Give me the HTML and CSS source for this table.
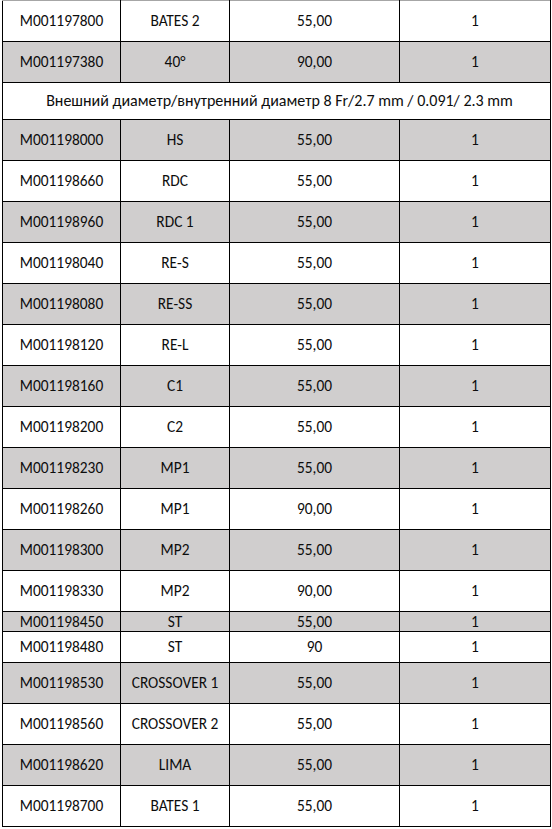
FILE: index.html
```html
<!DOCTYPE html>
<html lang="ru">
<head>
<meta charset="utf-8">
<title>Таблица</title>
<link rel="stylesheet" href="styles.css">
</head>
<body>
<table class="grid">
  <colgroup>
    <col class="c1"><col class="c2"><col class="c3"><col class="c4">
  </colgroup>
  <tbody>
    <tr class="first"><td>M001197800</td><td>BATES 2</td><td>55,00</td><td>1</td></tr>
    <tr class="alt"><td>M001197380</td><td>40°</td><td>90,00</td><td>1</td></tr>
    <tr class="note"><td colspan="4">Внешний диаметр/внутренний диаметр 8 Fr/2.7 mm / 0.091/ 2.3 mm</td></tr>
    <tr class="alt"><td>M001198000</td><td>HS</td><td>55,00</td><td>1</td></tr>
    <tr><td>M001198660</td><td>RDC</td><td>55,00</td><td>1</td></tr>
    <tr class="alt"><td>M001198960</td><td>RDC 1</td><td>55,00</td><td>1</td></tr>
    <tr><td>M001198040</td><td>RE-S</td><td>55,00</td><td>1</td></tr>
    <tr class="alt"><td>M001198080</td><td>RE-SS</td><td>55,00</td><td>1</td></tr>
    <tr><td>M001198120</td><td>RE-L</td><td>55,00</td><td>1</td></tr>
    <tr class="alt"><td>M001198160</td><td>C1</td><td>55,00</td><td>1</td></tr>
    <tr><td>M001198200</td><td>C2</td><td>55,00</td><td>1</td></tr>
    <tr class="alt"><td>M001198230</td><td>MP1</td><td>55,00</td><td>1</td></tr>
    <tr><td>M001198260</td><td>MP1</td><td>90,00</td><td>1</td></tr>
    <tr class="alt"><td>M001198300</td><td>MP2</td><td>55,00</td><td>1</td></tr>
    <tr><td>M001198330</td><td>MP2</td><td>90,00</td><td>1</td></tr>
    <tr class="alt short"><td>M001198450</td><td>ST</td><td>55,00</td><td>1</td></tr>
    <tr class="mid"><td>M001198480</td><td>ST</td><td>90</td><td>1</td></tr>
    <tr class="alt"><td>M001198530</td><td>CROSSOVER 1</td><td>55,00</td><td>1</td></tr>
    <tr><td>M001198560</td><td>CROSSOVER 2</td><td>55,00</td><td>1</td></tr>
    <tr class="alt"><td>M001198620</td><td>LIMA</td><td>55,00</td><td>1</td></tr>
    <tr><td>M001198700</td><td>BATES 1</td><td>55,00</td><td>1</td></tr>
  </tbody>
</table>
</body>
</html>
```
FILE: styles.css
```css
html, body {
  margin: 0;
  padding: 0;
  background: #ffffff;
}
body {
  font-family: Carlito, Calibri, Lato, "Open Sans", sans-serif;
  font-size: 15.4px;
  color: #0d0d0d;
}
.grid {
  border-collapse: collapse;
  table-layout: fixed;
  width: 548px;
  margin-left: 2px;
}
.c1 { width: 118px; }
.c2 { width: 109px; }
.c3 { width: 170px; }
.c4 { width: 151px; }
.grid td {
  border: 1px solid #000000;
  padding: 0;
  height: 40px;
  text-align: center;
  vertical-align: middle;
  line-height: 18px;
  white-space: nowrap;
}
.grid tr.first td {
  border-top-color: #a6a6a6;
}
.grid tr.alt td {
  background: #d0cece;
}
.grid tr.note td {
  height: 36px;
  font-size: 16px;
  padding-left: 6px;
}
.grid tr.short td {
  height: 19px;
}
.grid tr.mid td {
  height: 30px;
}
```
